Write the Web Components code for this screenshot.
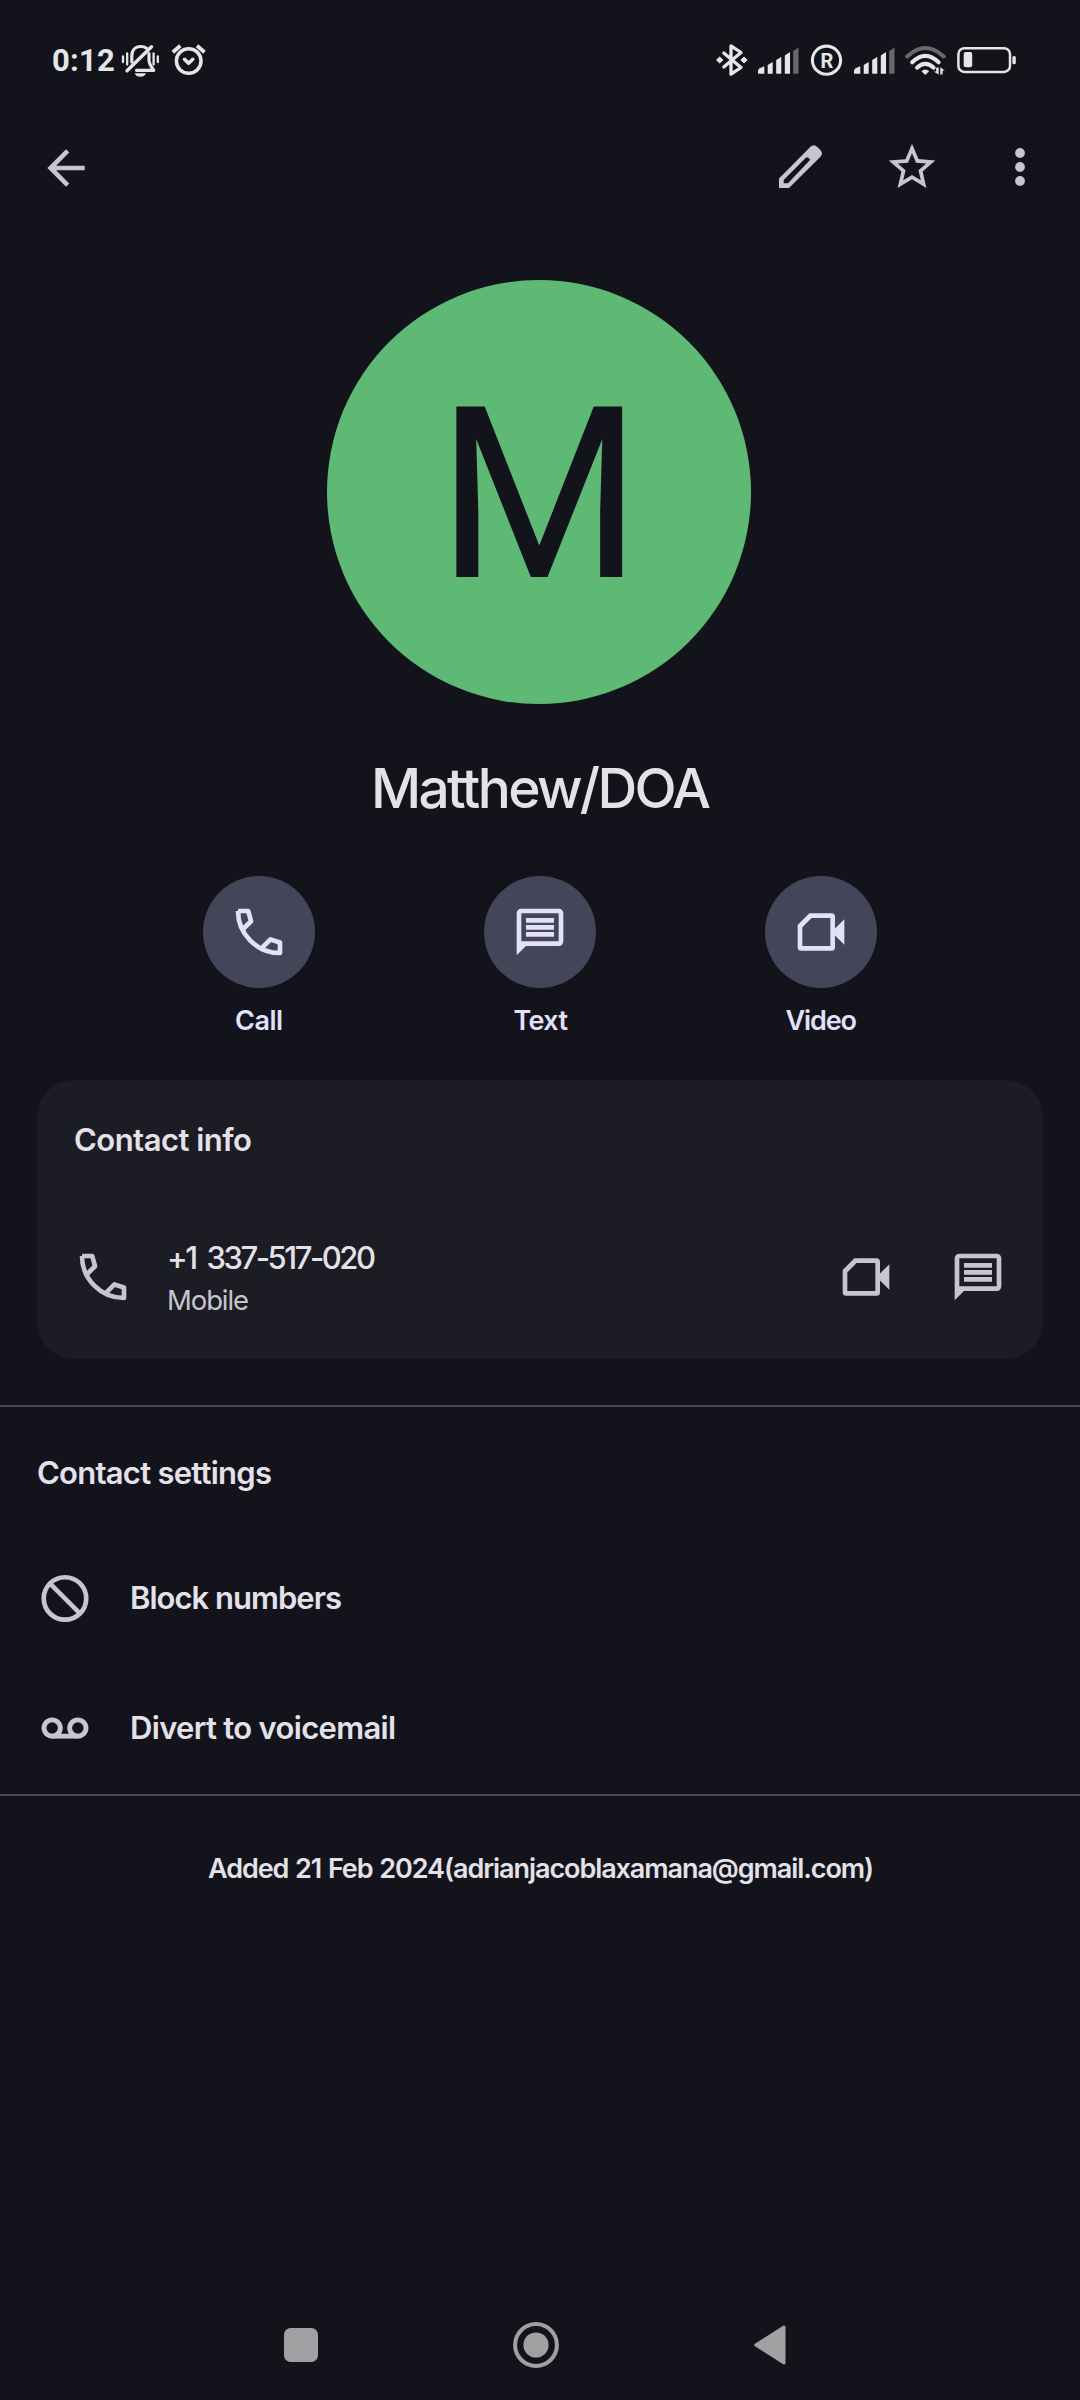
<!DOCTYPE html>
<html lang="en">
<head>
<meta charset="utf-8">
<title>Contact</title>
<style>
html,body{margin:0;background:#12131b}
body{width:1080px;height:2400px;overflow:hidden;font-family:Inter,"Noto Sans",sans-serif;color:#e4e1e9}
</style>
</head>
<body>
<contact-screen></contact-screen>
<script>
const define = (name, html, ready) => {
  const t = document.createElement('template');
  t.innerHTML = html;
  customElements.define(name, class extends HTMLElement {
    connectedCallback() {
      if (this.shadowRoot) return;
      this.attachShadow({mode: 'open'}).append(t.content.cloneNode(true));
      if (ready) ready(this, this.shadowRoot);
    }
  });
};

/* Single text line tracked so that its ink spans exactly `w` pixels; `ws` widens each space. */
define('fit-text', `<style>:host{display:block;white-space:nowrap;flex:none}span{display:inline-block}</style><span><slot></slot></span>`, (el, root) => {
  const cs = getComputedStyle(el), ctx = document.createElement('canvas').getContext('2d');
  const text = el.textContent.trim(), w = +el.getAttribute('w'), ws = +(el.getAttribute('ws') || 0);
  ctx.font = `${cs.fontWeight} ${cs.fontSize} ${cs.fontFamily}`;
  const m = ctx.measureText(text);
  const ink = m.actualBoundingBoxLeft + m.actualBoundingBoxRight + ws * (text.split(' ').length - 1);
  const s = root.querySelector('span');
  el.style.width = w + 'px';
  s.style.wordSpacing = ws + 'px';
  if (text.length > 1) s.style.letterSpacing = ((w - ink) / (text.length - 1)).toFixed(3) + 'px';
  s.style.marginLeft = m.actualBoundingBoxLeft.toFixed(2) + 'px';
});

const ICONS = {
  back: '<path d="M20 11H7.8l5.6-5.6L12 4l-8 8 8 8 1.4-1.4L7.8 13H20z"/>',
  edit: '<g transform="scale(.42857)"><path fill-rule="evenodd" d="M7 49V39.5L38 8.3Q41.6 4.6 45.4 8L48.4 11Q51.600 14.500 48.200 18L17 49ZM11.700 44.300H16L38 21Q38.300 20 35.400 18.200Q34.500 18 33.600 19L11.700 41Z"/></g>',
  star: '<path d="M22 9.24l-7.19-.62L12 2 9.19 8.63 2 9.24l5.46 4.73L5.82 21 12 17.27 18.18 21l-1.63-7.03L22 9.240zM12 15.4l-3.760 2.270 1-4.280-3.320-2.880 4.380-.38L12 6.100l1.710 4.040 4.380.38-3.320 2.880 1 4.280L12 15.400z"/>',
  more: '<circle cx="12" cy="6" r="2.1"/><circle cx="12" cy="12" r="2.1"/><circle cx="12" cy="18" r="2.1"/>',
  call: '<g fill="none" stroke="currentColor" stroke-width="2" stroke-linejoin="round"><path d="M3 3C3 12.900 11.100 21 21 21V16.500L16.900 15.200L13.400 18.700M3 3H7.400L8.600 7.400L5.300 10.600"/></g>',
  message: '<path fill-rule="evenodd" d="M4 2h16a2 2 0 0 1 2 2v12a2 2 0 0 1-2 2H6l-4 4V4a2 2 0 0 1 2-2zM4 4v12h16V4zM6 6h12v2H6zM6 9h12v2H6zM6 12h12v2H6z"/>',
  video: '<path fill-rule="evenodd" d="M7 4h9.500A1.500 1.500 0 0 1 18 5.500V10.500L22 6.500v11L18 13.500V18.500A1.500 1.500 0 0 1 16.500 20H3.500A1.500 1.500 0 0 1 2 18.500V9zM8 6L4 10v8h12V6z"/>',
  block: '<g fill="none" stroke="currentColor" stroke-width="2"><circle cx="12" cy="12.200" r="9.100"/><path d="M5.300 5.500L18.700 18.900"/></g>',
  voicemail: '<g fill="none" stroke="currentColor" stroke-width="2.100"><circle cx="6.500" cy="12" r="3.500"/><circle cx="17.500" cy="12" r="3.500"/><path d="M6.500 15.500H17.500"/></g>'
};
define('md-icon', `<style>:host{display:block;width:56px;height:56px;flex:none;color:#c7c5d0}svg{display:block;width:56px;height:56px;fill:currentColor}</style><svg viewBox="0 0 24 24"></svg>`, (el, root) => {
  root.querySelector('svg').innerHTML = ICONS[el.getAttribute('name')];
});

/* Status glyphs share one pixel grid: 36px tall, starting at y = 42. */
const bars = x => `<g transform="translate(${x} 0)"><path d="M0 73.700V71Q0 69 2 68L6.300 66.300V73.700ZM9.700 73.700V65L14.700 62V73.700ZM18.200 73.700V60L23.300 57V73.700ZM26.800 73.700V55.500L32 52V73.700Z"/><path fill="#68686d" d="M35.200 73.700V51L40.500 47.500V73.700Z"/></g>`;
const STATUS = {
  bell: [120, 42, '<path class="s" d="M131.800 62V56C131.800 50 135.500 46.500 140.500 46.500C143 46.500 145 47 146.500 48.200M149 53.500V60.500C149.300 64.500 151.500 67 153.700 70.300H136.500" stroke-width="3.200"/><path class="s" stroke-width="3.400" d="M127 70.800L151.500 46.700"/><path class="s" stroke-width="2.300" d="M123 56.500V62M127.200 53.500V64.500M153.600 53.500V64.500M157.800 56.500V62" stroke-linecap="butt"/><path d="M134.700 73.200H146Q144.500 76.700 140.400 76.700T134.700 73.200Z"/>'],
  alarm: [170, 38, '<g class="s" stroke-width="3.500"><circle cx="188.700" cy="61" r="12.300"/><path d="M184.500 59.300L188.600 63.300L192.800 59.300"/><path stroke-width="3.800" stroke-linecap="butt" d="M172.800 52.300L180.300 45.800M197 45.800L204.500 52.300"/></g>'],
  bluetooth: [715, 34, '<path class="s" stroke-width="3.300" d="M723.800 53L741 67.500L731 74.200V45.800L741 52.500L723.800 67"/><path d="M716.500 60l3.200-3 3.200 3-3.200 3zM740.800 60l3.200-3 3.200 3-3.200 3z" stroke="#e6e6e8"/>'],
  signal1: [757, 43, bars(758)],
  roaming: [810, 34, '<circle class="s" cx="826.500" cy="60.200" r="14.100" stroke-width="3.100"/><text x="826.900" y="67.500" text-anchor="middle" font-family="Roboto,sans-serif" font-weight="700" font-size="20">R</text>'],
  signal2: [853, 43, bars(854)],
  wifi: [904, 44, '<g class="s" stroke-width="4" stroke-linecap="butt"><path stroke="#68686d" d="M907.200 56.500Q925.300 39.500 943.700 56.500"/><path d="M912.200 62.300Q925.300 49.500 938.600 62.300"/><path d="M917 67.700Q925.300 60 933.700 67.700"/></g><path d="M921.400 71.200Q925.300 67.700 929.200 71.200L925.300 75Z"/><path d="M936.200 67.500H938.700V74.500L933.500 71.500H936.200ZM940.300 74.500V67.200L944.800 70.500H942.600V74.500Z"/>'],
  battery: [956, 62, '<rect class="s" x="958.400" y="48.200" width="51.600" height="23.700" rx="6" stroke-width="2.500"/><rect x="963.700" y="52" width="8.500" height="15.300" rx="2"/><rect x="1012.400" y="56" width="3.400" height="8.300" rx="1.500"/>']
};
define('status-icon', `<style>:host{display:block;flex:none}svg{display:block;fill:#e6e6e8}.s{fill:none;stroke:#e6e6e8;stroke-linecap:round;stroke-linejoin:round}</style><svg height="36"></svg>`, (el, root) => {
  const [x, w, body] = STATUS[el.getAttribute('name')], svg = root.querySelector('svg');
  svg.setAttribute('width', w);
  svg.setAttribute('viewBox', `${x} 42 ${w} 36`);
  svg.innerHTML = body;
});

define('status-bar', `<style>
:host{display:flex;height:70px;padding:42px 62px 0 53px;align-items:flex-start;color:#e6e6e8}
fit-text{font:700 31px/36px Roboto,sans-serif;margin:1px 6px 0 0}
.r{margin-left:auto;display:flex}
</style>
<fit-text w="61">0:12</fit-text><status-icon name="bell"></status-icon><status-icon name="alarm" style="margin-left:8px"></status-icon>
<div class="r"><status-icon name="bluetooth"></status-icon><status-icon name="signal1" style="margin-left:8px"></status-icon><status-icon name="roaming" style="margin-left:10px"></status-icon><status-icon name="signal2" style="margin-left:9px"></status-icon><status-icon name="wifi" style="margin-left:8px"></status-icon><status-icon name="battery" style="margin-left:8px"></status-icon></div>`);

define('app-bar', `<style>
:host{display:flex;height:112px;align-items:center;padding:0 32px 0 38px;box-sizing:border-box}
.r{margin:0 0 2px auto;display:flex}
</style><md-icon name="back"></md-icon>
<div class="r"><md-icon name="edit"></md-icon><md-icon name="star" style="margin:0 52px 0 56px"></md-icon><md-icon name="more"></md-icon></div>`);

define('contact-avatar', `<style>
:host{display:flex;width:424px;height:424px;padding-top:6px;box-sizing:border-box;border-radius:50%;background:#5eb975;color:#12131b;align-items:center;justify-content:center;font:400 239px/280px Roboto,sans-serif}
span{transform:scaleX(.98)}
</style><span><slot></slot></span>`);

define('action-button', `<style>
:host{display:flex;flex-direction:column;align-items:center;width:112px;gap:17px;color:#e3e0f9;font-size:27px;font-weight:600;line-height:32px}
.c{width:112px;height:112px;border-radius:50%;background:#454559;display:flex;align-items:center;justify-content:center}
md-icon{color:#e3e0f9}
</style><div class="c"><md-icon></md-icon></div><slot></slot>`, (el, root) => {
  root.querySelector('md-icon').replaceWith(Object.assign(document.createElement('div'), {innerHTML: `<md-icon name="${el.getAttribute('icon')}"></md-icon>`}).firstChild);
});

define('info-card', `<style>
:host{display:block;margin:0 37px;height:279px;box-sizing:border-box;border-radius:37px;background:#1c1c24;padding:40px 37px 0 38px}
.title{font-size:31px;line-height:40px;font-weight:600}
</style><div class="title"><slot name="title"></slot></div><slot></slot>`);

define('phone-row', `<style>
:host{display:flex;height:80px;margin-top:77px;align-items:center}
.t{margin-left:38px;display:flex;flex-direction:column;gap:6px;font-size:31px;line-height:40px;font-weight:500}
.k{font-size:27.500px;line-height:32px;font-weight:400;color:#c7c5d0}
.r{display:flex;gap:56px;margin-left:auto}
</style><md-icon name="call"></md-icon>
<div class="t"><slot></slot><div class="k"><slot name="kind"></slot></div></div>
<div class="r"><md-icon name="video"></md-icon><md-icon name="message"></md-icon></div>`);

define('divider-line', `<style>:host{display:block;height:2px;background:#46464f}</style>`);

define('setting-row', `<style>
:host{display:flex;height:130px;align-items:center;gap:39px;padding-left:37px;font-size:31px;line-height:40px;font-weight:600}
</style><slot name="icon"></slot><slot></slot>`);

define('nav-bar', `<style>
:host{display:flex;height:110px;margin-top:auto;padding-left:284px;align-items:center}
svg{display:block;fill:#a1a1a3}
</style>
<svg width="34" height="34"><rect width="34" height="34" rx="6.500"/></svg>
<svg width="48" height="48" style="margin-left:194px"><circle cx="24" cy="24" r="20.900" fill="none" stroke="#a1a1a3" stroke-width="4"/><circle cx="24" cy="24" r="12.600"/></svg>
<svg width="34" height="42" style="margin-left:193px"><path stroke="#a1a1a3" stroke-width="3" stroke-linejoin="round" d="M2.700 21L31 3V39Z"/></svg>`);

define('contact-screen', `<style>
:host{display:flex;flex-direction:column;width:1080px;height:2400px;background:#12131b}
contact-avatar{margin:56px 0 0 327px}
.name{font-size:55px;line-height:64px;font-weight:500;margin:52px 0 0 375px}
.actions{display:flex;gap:169px;padding-left:203px;margin:56px 0 43px}
.h{font-size:31px;line-height:40px;font-weight:600;margin:46px 0 40px 38px}
.foot{font-size:27px;line-height:32px;font-weight:600;margin:57px 0 0 208px}
</style>
<status-bar></status-bar>
<app-bar></app-bar>
<contact-avatar>M</contact-avatar>
<fit-text class="name" w="335">Matthew/DOA</fit-text>
<div class="actions">
<action-button icon="call"><fit-text w="46">Call</fit-text></action-button>
<action-button icon="message"><fit-text w="54" style="margin-left:3px">Text</fit-text></action-button>
<action-button icon="video"><fit-text w="71">Video</fit-text></action-button>
</div>
<info-card><fit-text slot="title" w="176">Contact info</fit-text>
<phone-row><fit-text w="206" ws="5">+1 337-517-020</fit-text><fit-text slot="kind" w="79">Mobile</fit-text></phone-row>
</info-card>
<divider-line style="margin-top:46px"></divider-line>
<fit-text class="h" w="233">Contact settings</fit-text>
<setting-row><md-icon slot="icon" name="block"></md-icon><fit-text w="209">Block numbers</fit-text></setting-row>
<setting-row><md-icon slot="icon" name="voicemail"></md-icon><fit-text w="263">Divert to voicemail</fit-text></setting-row>
<divider-line style="margin-top:1px"></divider-line>
<fit-text class="foot" w="664" ws="1">Added 21 Feb 2024(adrianjacoblaxamana@gmail.com)</fit-text>
<nav-bar></nav-bar>`);
</script>
</body>
</html>
